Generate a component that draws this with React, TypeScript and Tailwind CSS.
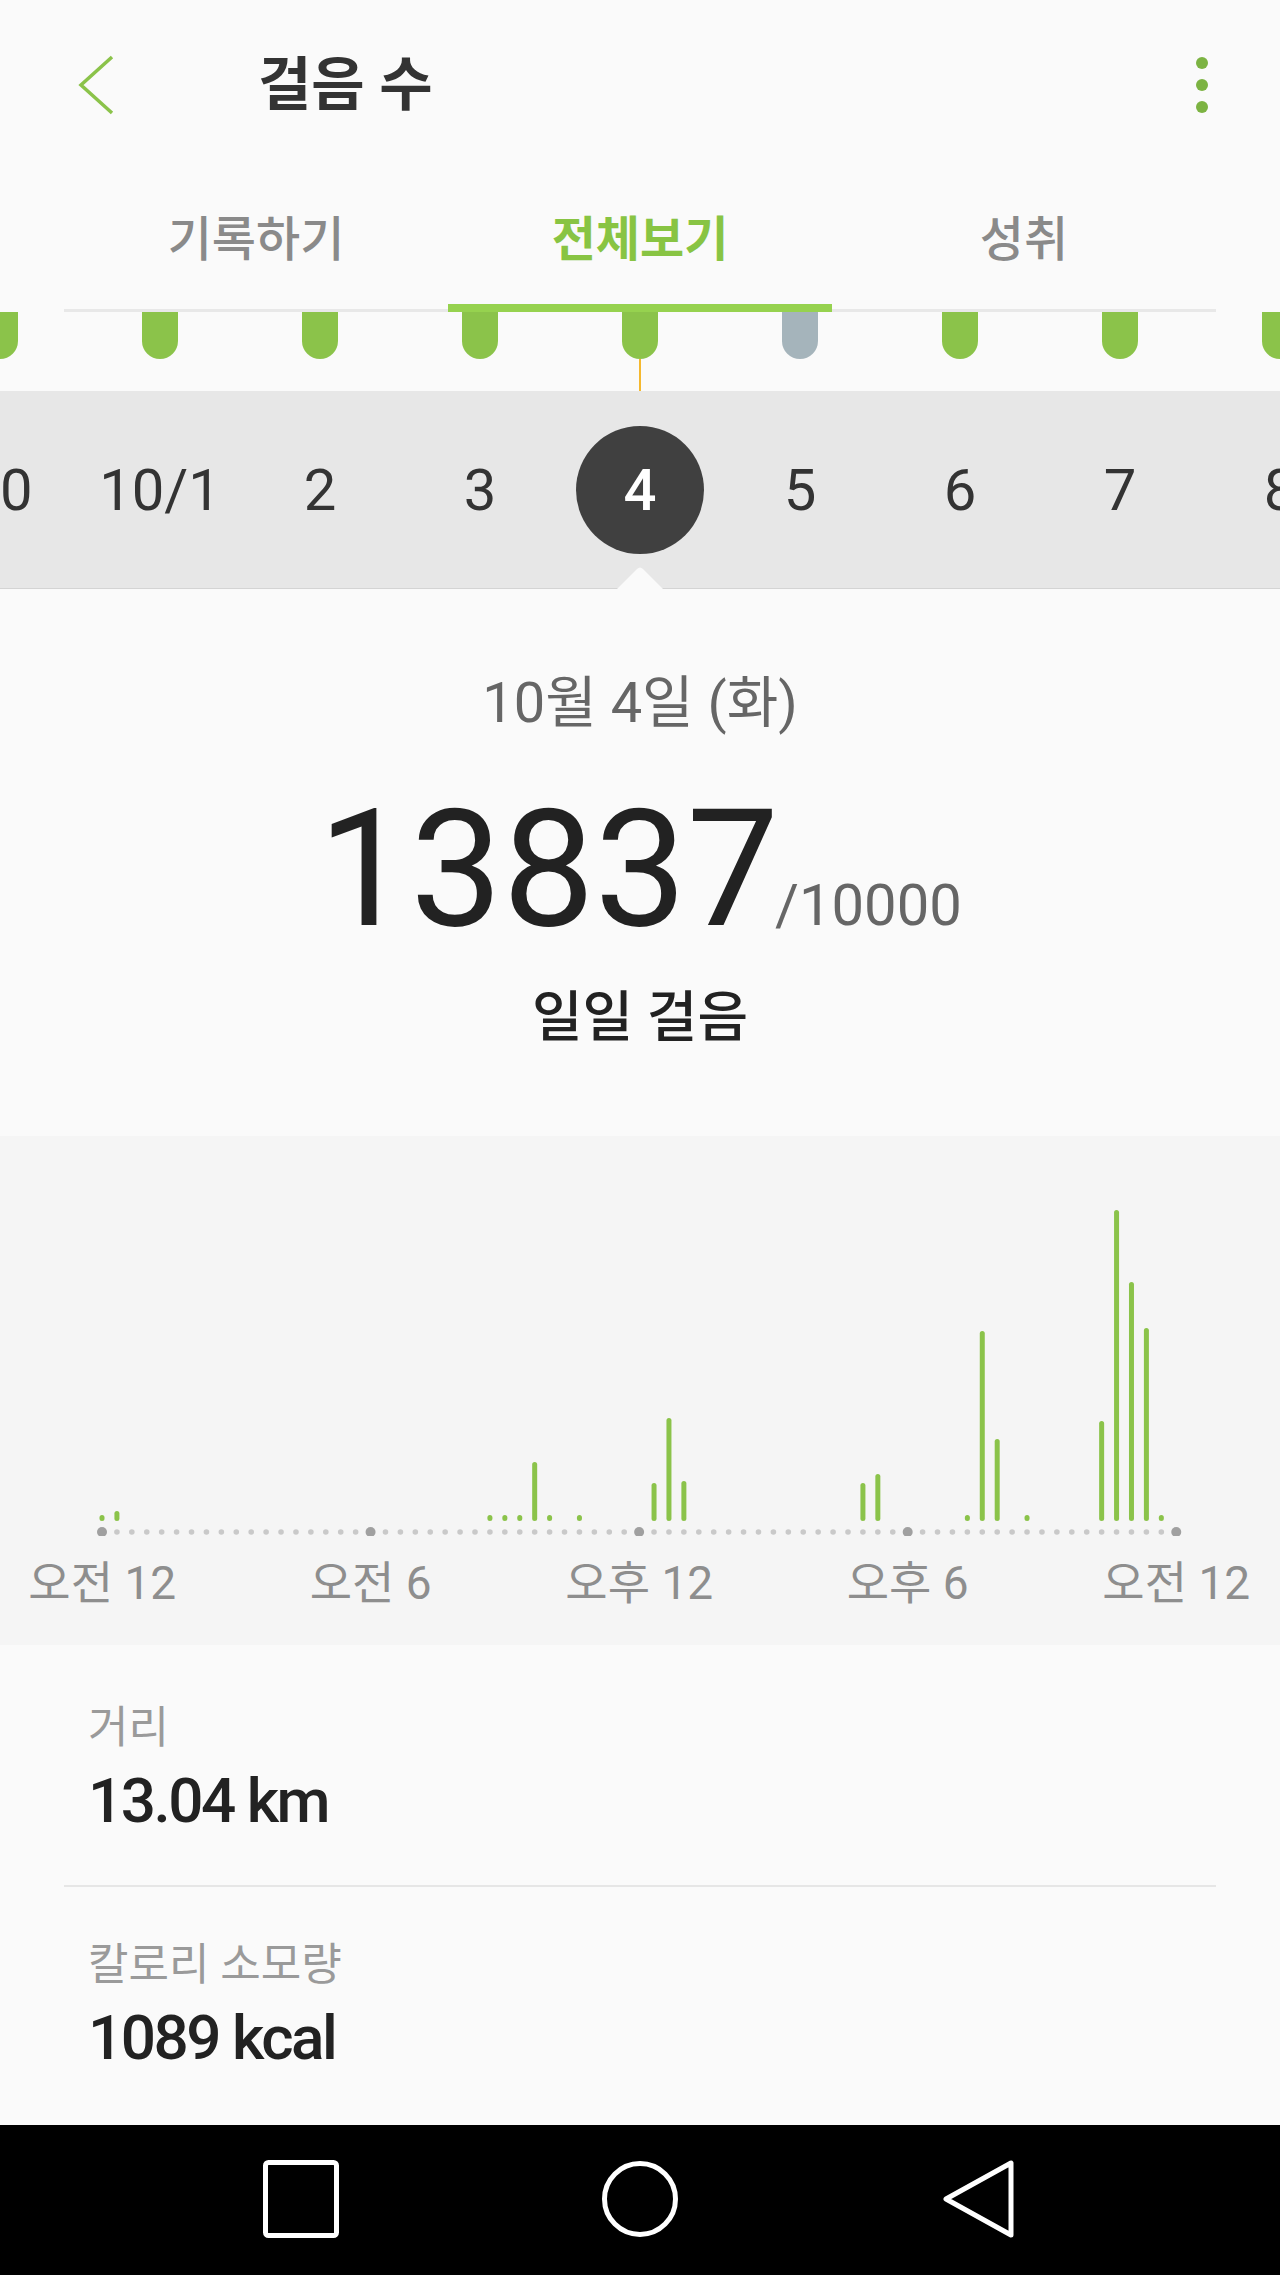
import React from "react"

const dates = ["30", "10/1", "2", "3", "4", "5", "6", "7", "8"]

// [slot index (20 min each), bar height in px]
const bars: [number, number][] = [
  [0, 6], [1, 10], [26, 6], [27, 6], [28, 6], [29, 59], [30, 6], [32, 6],
  [37, 38], [38, 103], [39, 40], [51, 38], [52, 47], [58, 6], [59, 190],
  [60, 82], [62, 6], [67, 100], [68, 311], [69, 239], [70, 193], [71, 6],
]

const axisLabels = ["오전 12", "오전 6", "오후 12", "오후 6", "오전 12"]

const slotX = (i: number) => 102 + i * 14.92

function Header() {
  return (
    <div className="flex h-[170px] items-center pl-[78px] pr-[72px]">
      <svg width="36" height="60" viewBox="0 0 36 60" fill="none">
        <path d="M34 2 L3 30 L34 58" stroke="#8bc34a" strokeWidth="3.5" />
      </svg>
      <div className="ml-[144px] text-[58px] leading-[58px] font-bold text-[#333]">걸음 수</div>
      <div className="ml-auto flex flex-col gap-[10px]">
        <span className="h-[12px] w-[12px] rounded-full bg-[#7cb342]" />
        <span className="h-[12px] w-[12px] rounded-full bg-[#7cb342]" />
        <span className="h-[12px] w-[12px] rounded-full bg-[#7cb342]" />
      </div>
    </div>
  )
}

function Tabs() {
  const tabs = ["기록하기", "전체보기", "성취"]
  return (
    <div className="mx-16 grid h-[142px] grid-cols-3">
      {tabs.map((t, i) => {
        const active = i === 1
        return (
          <div key={t} className="flex flex-col items-center pt-[46px]">
            <div
              className={
                active
                  ? "text-[48px] leading-[48px] font-bold text-[#88c443]"
                  : "text-[48px] leading-[48px] font-medium text-[#8a8a8a]"
              }
            >
              {t}
            </div>
            <div className="flex-1" />
            {active ? (
              <div className="h-[8px] w-full bg-[#96d24f]" />
            ) : (
              <div className="flex h-[8px] w-full flex-col justify-end">
                <div className="h-[3px] w-full bg-[#e8e8e8]" />
              </div>
            )}
          </div>
        )
      })}
    </div>
  )
}

function DateStrip() {
  return (
    <>
      <div className="-ml-[80px] flex h-[47px] w-[1440px]">
        {dates.map((d) => (
          <div key={d} className="flex w-[160px] shrink-0 justify-center">
            <div
              className={
                d === "5"
                  ? "h-[47px] w-[36px] rounded-b-[18px] bg-[#a5b4bb]"
                  : "h-[47px] w-[36px] rounded-b-[18px] bg-[#8bc34a]"
              }
            />
          </div>
        ))}
      </div>
      <div className="flex h-[32px] justify-center">
        <div className="h-full w-[2px] bg-[#f5b82e]" />
      </div>
      <div className="relative h-[198px] border-b border-[#d4d4d4] bg-[#e7e7e7]">
        <div className="-ml-[80px] flex h-full w-[1440px] items-center">
          {dates.map((d) => (
            <div key={d} className="flex w-[160px] shrink-0 justify-center">
              {d === "4" ? (
                <div className="flex h-[128px] w-[128px] items-center justify-center rounded-full bg-[#404040] text-[58px] leading-[58px] font-medium text-white">
                  4
                </div>
              ) : (
                <div className="text-[58px] leading-[58px] text-[#333]">{d}</div>
              )}
            </div>
          ))}
        </div>
        <svg
          className="absolute bottom-[-1px] left-[617px]"
          width="46"
          height="22"
          viewBox="0 0 46 22"
        >
          <path d="M0 22 L20 2 Q23 -1 26 2 L46 22 Z" fill="#fafafa" />
        </svg>
      </div>
    </>
  )
}

function Summary() {
  return (
    <div className="flex h-[547px] flex-col items-center pt-[86px]">
      <div className="text-[56px] leading-[56px] text-[#666]">10월 4일 (화)</div>
      <div className="mt-[56px] flex items-baseline">
        <span className="text-[164px] leading-[164px] text-[#222]">13837</span>
        <span className="-ml-[4px] text-[58px] leading-[58px] text-[#666]">/10000</span>
      </div>
      <div className="mt-[39px] text-[55px] leading-[55px] font-medium text-[#222]">일일 걸음</div>
    </div>
  )
}

function Chart() {
  const dots = Array.from({ length: 73 }, (_, i) => i)
  return (
    <div className="flex h-[509px] flex-col bg-[#f5f5f5]">
      <svg width="1280" height="400" viewBox="0 0 1280 400">
        {bars.map(([i, h]) => (
          <rect
            key={i}
            x={slotX(i) - 2.5}
            y={385 - h}
            width="5"
            height={h}
            rx="2.5"
            fill="#8bc34a"
          />
        ))}
        {dots.map((i) =>
          i % 18 === 0 ? (
            <circle key={i} cx={slotX(i)} cy="396" r="5" fill="#a0a0a0" />
          ) : (
            <circle key={i} cx={slotX(i)} cy="396" r="2.8" fill="#c9c9c9" />
          )
        )}
      </svg>
      <div className="-ml-[32px] mt-[24px] flex">
        {axisLabels.map((l, i) => (
          <div
            key={i}
            className="w-[268.5px] shrink-0 text-center text-[46px] leading-[46px] text-[#8e8e8e]"
          >
            {l}
          </div>
        ))}
      </div>
    </div>
  )
}

function Stat(props: { label: string; value: string }) {
  return (
    <div className="flex flex-col px-[88px]">
      <div className="text-[44px] leading-[44px] text-[#9a9a9a]">{props.label}</div>
      <div className="mt-[20px] text-[62px] leading-[62px] font-medium tracking-[-0.04em] text-[#222]">
        {props.value}
      </div>
    </div>
  )
}

function NavBar() {
  return (
    <div className="flex h-[150px] items-center justify-center gap-[259px] bg-black">
      <svg width="80" height="80" viewBox="0 0 80 80" fill="none">
        <rect x="4.5" y="2.5" width="71" height="73" rx="3" stroke="white" strokeWidth="5" />
      </svg>
      <svg width="80" height="80" viewBox="0 0 80 80" fill="none">
        <circle cx="40" cy="39" r="35.5" stroke="white" strokeWidth="5" />
      </svg>
      <svg width="80" height="80" viewBox="0 0 80 80" fill="none">
        <path d="M72 3 L72 75 L7 39 Z" stroke="white" strokeWidth="5" strokeLinejoin="round" />
      </svg>
    </div>
  )
}

export default function App() {
  return (
    <div className="flex h-[2275px] w-[1280px] flex-col overflow-hidden bg-[#fafafa] font-[Roboto,'Noto_Sans_CJK_KR',sans-serif]">
      <Header />
      <Tabs />
      <DateStrip />
      <Summary />
      <Chart />
      <div className="flex h-[480px] flex-col">
        <div className="h-[240px] pt-[61px]">
          <Stat label="거리" value="13.04 km" />
        </div>
        <div className="mx-16 h-[2px] bg-[#e6e6e6]" />
        <div className="h-[238px] pt-[56px]">
          <Stat label="칼로리 소모량" value="1089 kcal" />
        </div>
      </div>
      <NavBar />
    </div>
  )
}
